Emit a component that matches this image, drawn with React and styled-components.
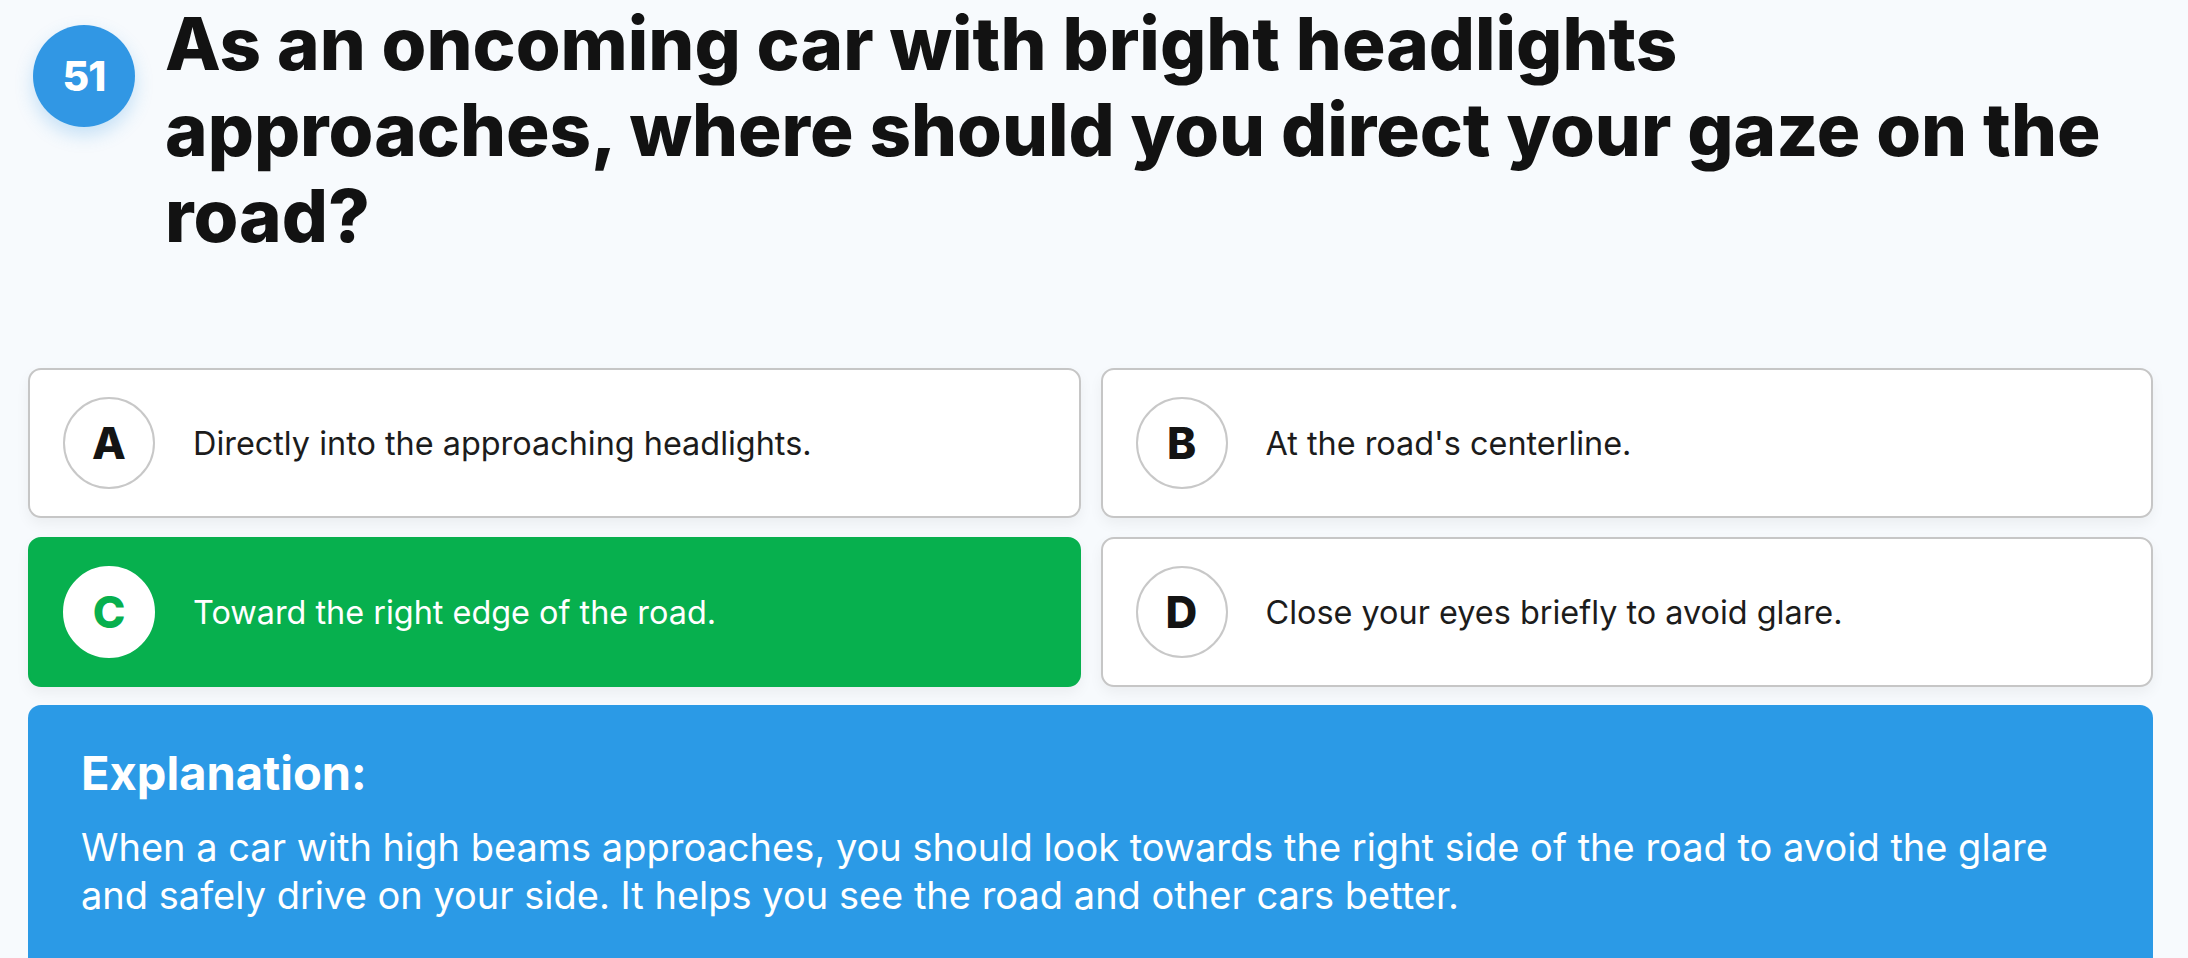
import React from 'react';
import styled, { createGlobalStyle } from 'styled-components';

const GlobalStyle = createGlobalStyle`
  html, body {
    margin: 0;
    padding: 0;
    background: #f7fafd;
    font-family: Inter, "Noto Sans", "Liberation Sans", sans-serif;
    overflow: hidden;
  }
`;

const Page = styled.div`
  padding: 1px 35px 0 28px;
  min-height: 957px;
  box-sizing: border-box;
`;

const Header = styled.div`
  display: flex;
  align-items: flex-start;
  gap: 30px;
  padding-left: 5px;
`;

const Badge = styled.div`
  flex: none;
  width: 102px;
  height: 102px;
  margin-top: 24px;
  border-radius: 50%;
  background: #3197e4;
  color: #fff;
  display: flex;
  align-items: center;
  justify-content: center;
  font-size: 41px;
  font-weight: 800;
  letter-spacing: -1px;
  box-shadow: 0 8px 18px rgba(49, 151, 228, 0.25);
`;

const Title = styled.h1`
  margin: 0;
  font-size: 72.5px;
  line-height: 86px;
  font-weight: 800;
  color: #121212;
  white-space: nowrap;
`;

const Options = styled.div`
  display: grid;
  grid-template-columns: 1fr 1fr;
  gap: 19px 20px;
  margin-top: 109px;
`;

const Card = styled.div`
  display: flex;
  align-items: center;
  gap: 38px;
  height: 150px;
  box-sizing: border-box;
  padding: 0 33px;
  border-radius: 13px;
  border: 2px solid ${({ correct }) => (correct ? '#07b04e' : '#c6c6c6')};
  background: ${({ correct }) => (correct ? '#07b04e' : '#ffffff')};
  box-shadow: 0 6px 14px rgba(0, 0, 0, 0.05);
`;

const Letter = styled.div`
  flex: none;
  width: 92px;
  height: 92px;
  box-sizing: border-box;
  border-radius: 50%;
  display: flex;
  align-items: center;
  justify-content: center;
  font-size: 44px;
  font-weight: 800;
  border: 2px solid ${({ correct }) => (correct ? '#ffffff' : '#c8c8c8')};
  background: #fff;
  color: ${({ correct }) => (correct ? '#07b04e' : '#141414')};
`;

const OptionText = styled.span`
  font-size: 32.4px;
  color: ${({ correct }) => (correct ? '#ffffff' : '#1c1c1c')};
`;

const Explanation = styled.div`
  margin-top: 18px;
  background: #2b9ae6;
  border-radius: 13px;
  padding: 41px 53px 80px;
  color: #fff;
`;

const ExplTitle = styled.div`
  font-size: 47px;
  line-height: 54px;
  font-weight: 700;
`;

const ExplText = styled.p`
  margin: 23px 0 0;
  font-size: 38px;
  line-height: 48px;
`;

const options = [
  { key: 'A', text: 'Directly into the approaching headlights.' },
  { key: 'B', text: "At the road's centerline." },
  { key: 'C', text: 'Toward the right edge of the road.', correct: true },
  { key: 'D', text: 'Close your eyes briefly to avoid glare.' },
];

export default function App() {
  return (
    <>
      <GlobalStyle />
      <Page>
        <Header>
          <Badge>51</Badge>
          <Title>
            As an oncoming car with bright headlights
            <br />
            approaches, where should you direct your gaze on the
            <br />
            road?
          </Title>
        </Header>

        <Options>
          {options.map(opt => (
            <Card key={opt.key} correct={opt.correct}>
              <Letter correct={opt.correct}>{opt.key}</Letter>
              <OptionText correct={opt.correct}>{opt.text}</OptionText>
            </Card>
          ))}
        </Options>

        <Explanation>
          <ExplTitle>Explanation:</ExplTitle>
          <ExplText>
            When a car with high beams approaches, you should look towards the right side of the road to avoid the glare and safely drive on your side. It helps you see the road and other cars better.
          </ExplText>
        </Explanation>
      </Page>
    </>
  );
}
